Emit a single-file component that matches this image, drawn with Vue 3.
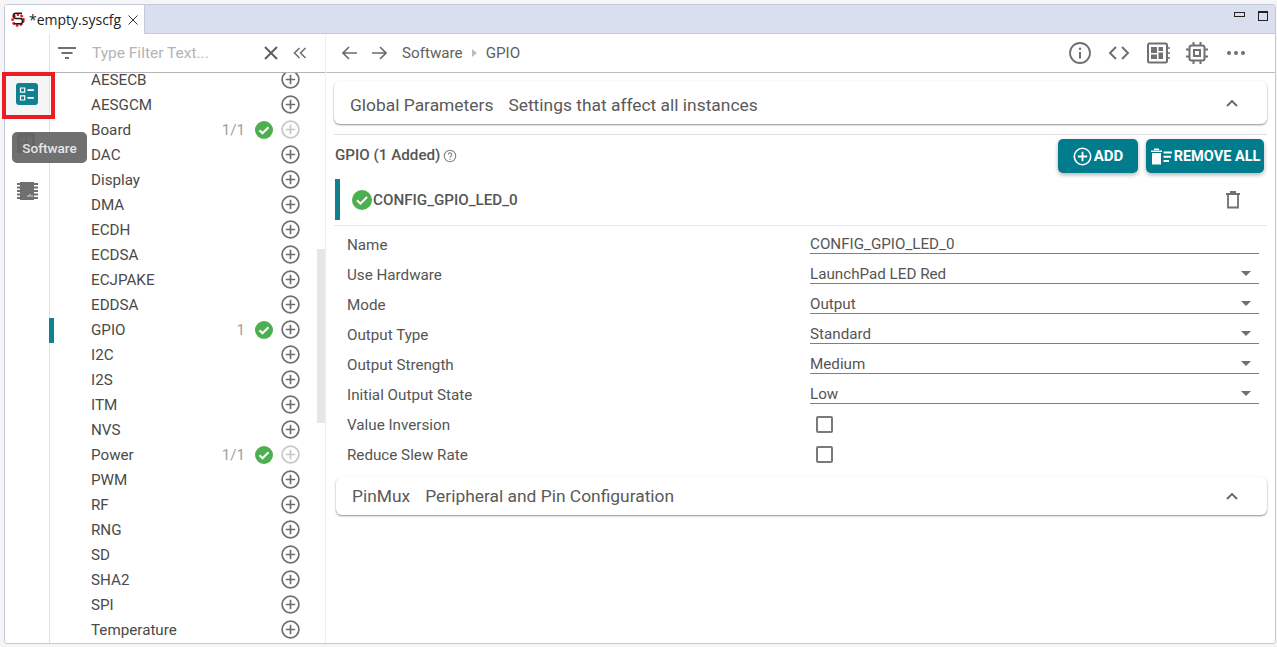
<template>
  <div class="frame">
    <!-- Tab bar -->
    <div class="tabbar">
      <div class="tab">
        <svg class="tab-logo" width="14" height="17" viewBox="0 0 14 17" fill="none">
          <circle cx="7" cy="9" r="5.400" stroke="#e0202a" stroke-width="2.600" stroke-dasharray="2.600 1.300" />
          <path d="M11 2.200H5a2.600 2.600 0 0 0 0 5.300h4a2.600 2.600 0 0 1 0 5.300H2.800" stroke="#1b1b1b" stroke-width="1.600" />
        </svg>
        <span class="tab-name">*empty.syscfg</span>
        <svg class="tab-close" width="10" height="10" viewBox="0 0 10 10">
          <path d="M.5.5l9 9M9.5.5l-9 9" stroke="#333" stroke-width="1" />
        </svg>
      </div>
      <div class="win-controls">
        <span class="win-min"></span>
        <span class="win-max"></span>
      </div>
    </div>

    <div class="body">
      <!-- Left icon rail -->
      <div class="rail">
        <div class="rail-btn active">
          <svg width="22" height="22" viewBox="0 0 22 22">
            <rect width="22" height="22" rx="3" fill="#11808f" />
            <path d="M4.500 5h4.200v4.200H4.500zM4.500 12.800h4.200V17H4.500z" fill="none" stroke="#fff" stroke-width="1.200" />
            <path d="M11.500 6.200h6.300v1.800h-6.300zM11.500 14h6.300v1.800h-6.300z" fill="#fff" />
          </svg>
        </div>
        <div class="rail-btn">
          <svg width="22" height="22" viewBox="0 0 22 22">
            <rect x="1" y="1" width="18" height="20" rx="2" fill="#6f6f6f" />
            <path d="M4 5h5v5H4zM11 5h5v12h-5zM4 12h5v5H4z" fill="#bbb" />
          </svg>
        </div>
        <div class="rail-btn">
          <svg width="22" height="22" viewBox="0 0 22 22">
            <path d="M4 2h14v18H4z" fill="#6f6f6f" />
            <path d="M1 4h21M1 7.500h21M1 11h21M1 14.500h21M1 18h21" stroke="#6f6f6f" stroke-width="1.800" />
            <path d="M12 17v-2M14 17v-3M16 17v-2" stroke="#ddd" stroke-width="1" />
          </svg>
        </div>
      </div>

      <!-- Module list -->
      <div class="sidebar">
        <div class="filter">
          <svg class="filter-icon" width="18" height="14" viewBox="0 0 18 14">
            <path d="M0 1h18v2H0zM3.500 6h11v2h-11zM7 11h4v2H7z" fill="#707070" />
          </svg>
          <span class="filter-text">Type Filter Text...</span>
          <svg class="filter-clear" width="14" height="14" viewBox="0 0 14 14">
            <path d="M1 1l12 12M13 1L1 13" stroke="#5f5f5f" stroke-width="2" />
          </svg>
          <svg class="filter-collapse" width="14" height="12" viewBox="0 0 14 12" fill="none">
            <path d="M6.500 1L1.500 6l5 5M12.500 1l-5 5 5 5" stroke="#707070" stroke-width="1.600" />
          </svg>
        </div>
        <div class="list">
          <div class="list-inner">
            <div v-for="m in modules" :key="m.name" class="row" :class="{ selected: m.name === 'GPIO' }">
              <span class="row-name">{{ m.name }}</span>
              <span v-if="m.count" class="row-count">{{ m.count }}</span>
              <svg v-if="m.count" class="row-check" width="18" height="18" viewBox="0 0 18 18">
                <circle cx="9" cy="9" r="9" fill="#4caf50" />
                <path d="M4.500 9.300l3 3 6-6" fill="none" stroke="#fff" stroke-width="2" />
              </svg>
              <svg class="row-add" :class="{ off: m.count && m.count !== '1' }" width="19" height="19" viewBox="0 0 19 19" fill="none">
                <circle cx="9.500" cy="9.500" r="8.400" stroke="currentColor" stroke-width="1.700" />
                <path d="M9.500 4.800v9.400M4.800 9.500h9.400" stroke="currentColor" stroke-width="1.700" />
              </svg>
            </div>
          </div>
          <div class="scroll-thumb"></div>
        </div>
      </div>

      <!-- Main content -->
      <div class="main">
        <div class="toolbar">
          <svg class="nav" width="16" height="14" viewBox="0 0 16 14" fill="none">
            <path d="M15 7H1.500M7 1L1 7l6 6" stroke="#6b6b6b" stroke-width="1.600" />
          </svg>
          <svg class="nav" width="16" height="14" viewBox="0 0 16 14" fill="none">
            <path d="M1 7h13.500M9 1l6 6-6 6" stroke="#6b6b6b" stroke-width="1.600" />
          </svg>
          <span class="crumb first">Software</span>
          <svg class="crumb-sep" width="5" height="8" viewBox="0 0 5 8"><path d="M0 0l5 4-5 4z" fill="#bdbdbd" /></svg>
          <span class="crumb">GPIO</span>
          <div class="tools">
            <svg width="24" height="24" viewBox="0 0 24 24" fill="none">
              <circle cx="12" cy="12" r="10" stroke="#707070" stroke-width="1.800" />
              <path d="M12 11v6.500" stroke="#707070" stroke-width="2" />
              <circle cx="12" cy="7.800" r="1.200" fill="#707070" />
            </svg>
            <svg width="24" height="24" viewBox="0 0 24 24" fill="none">
              <path d="M9 6l-6 6 6 6M15 6l6 6-6 6" stroke="#707070" stroke-width="2" />
            </svg>
            <svg width="24" height="24" viewBox="0 0 24 24" fill="none">
              <rect x="2" y="2.500" width="19" height="19" rx="1.500" stroke="#707070" stroke-width="2" />
              <path d="M5 6h6v6H5zM12.500 6H17v4h-4.500zM12.500 11.500H17V18h-4.500zM5 13.500h6V18H5z" fill="#707070" />
              <path d="M22 7h2M22 12h2M22 17h2" stroke="#707070" stroke-width="1.500" />
            </svg>
            <svg width="24" height="24" viewBox="0 0 24 24" fill="none">
              <rect x="4.500" y="4.500" width="15" height="15" rx="2" stroke="#707070" stroke-width="2" />
              <rect x="9" y="9" width="6" height="6" stroke="#707070" stroke-width="2" />
              <path d="M8.500 1v3M15.500 1v3M8.500 20v3M15.500 20v3M1 8.500h3M1 15.500h3M20 8.500h3M20 15.500h3" stroke="#707070" stroke-width="2" />
            </svg>
            <svg width="24" height="24" viewBox="0 0 24 24">
              <circle cx="5" cy="12" r="2" fill="#707070" />
              <circle cx="12" cy="12" r="2" fill="#707070" />
              <circle cx="19" cy="12" r="2" fill="#707070" />
            </svg>
          </div>
        </div>

        <div class="card global">
          <span class="card-title">Global Parameters</span>
          <span class="card-sub">Settings that affect all instances</span>
          <svg class="chevron" width="12" height="8" viewBox="0 0 12 8" fill="none">
            <path d="M1 7l5-5 5 5" stroke="#666" stroke-width="1.800" />
          </svg>
        </div>

        <div class="section-head">
          <span class="section-title">GPIO (1 Added)</span>
          <svg class="help" width="14" height="14" viewBox="0 0 14 14" fill="none">
            <circle cx="7" cy="7" r="5.700" stroke="#808080" stroke-width="1.100" />
            <path d="M5.200 5.700A1.800 1.800 0 1 1 7.600 7.400c-.5.300-.6.500-.6 1.100" stroke="#808080" stroke-width="1.100" />
            <circle cx="7" cy="10.200" r=".7" fill="#808080" />
          </svg>
          <button class="btn add">
            <svg width="19" height="19" viewBox="0 0 19 19" fill="none">
              <circle cx="9.500" cy="9.500" r="8.200" stroke="#fff" stroke-width="1.600" />
              <path d="M9.500 4.800v9.400M4.800 9.500h9.400" stroke="#fff" stroke-width="1.800" />
            </svg>
            ADD
          </button>
          <button class="btn remove">
            <svg width="23" height="18" viewBox="0 0 23 18">
              <path d="M1 3.500h11V5H1zM4 1.500h5V3H4zM2 6h9v11.500H2z" fill="#fff" />
              <path d="M13.500 4.500H22v2h-8.500zM13.500 8.800H21v2h-7.500zM13.500 13H19v2h-5.500z" fill="#fff" />
            </svg>
            REMOVE ALL
          </button>
        </div>

        <div class="instance">
          <svg width="20" height="20" viewBox="0 0 20 20">
            <circle cx="10" cy="10" r="10" fill="#4caf50" />
            <path d="M5 10.300l3.400 3.400 6.700-6.700" fill="none" stroke="#fff" stroke-width="2" />
          </svg>
          <span class="instance-name">CONFIG_GPIO_LED_0</span>
          <svg class="trash" width="14" height="18" viewBox="0 0 14 18" fill="none">
            <path d="M0 3h14M4 1h6" stroke="#707070" stroke-width="1.800" />
            <path d="M2 4v12.500h10V4" stroke="#707070" stroke-width="1.800" />
          </svg>
        </div>

        <div class="form">
          <template v-for="f in fields" :key="f.label">
            <div class="label">{{ f.label }}</div>
            <div v-if="f.check" class="check-cell"><span class="checkbox"></span></div>
            <div v-else class="value">
              <span>{{ f.value }}</span>
              <span v-if="f.select" class="caret"></span>
            </div>
          </template>
        </div>

        <div class="card pinmux">
          <span class="card-title">PinMux</span>
          <span class="card-sub">Peripheral and Pin Configuration</span>
          <svg class="chevron" width="12" height="8" viewBox="0 0 12 8" fill="none">
            <path d="M1 7l5-5 5 5" stroke="#666" stroke-width="1.800" />
          </svg>
        </div>
      </div>
    </div>

    <div class="tooltip">Software</div>
    <div class="highlight"></div>
  </div>
</template>

<script setup>
const modules = [
  { name: 'AESECB' }, { name: 'AESGCM' }, { name: 'Board', count: '1/1' }, { name: 'DAC' },
  { name: 'Display' }, { name: 'DMA' }, { name: 'ECDH' }, { name: 'ECDSA' }, { name: 'ECJPAKE' },
  { name: 'EDDSA' }, { name: 'GPIO', count: '1' }, { name: 'I2C' }, { name: 'I2S' }, { name: 'ITM' },
  { name: 'NVS' }, { name: 'Power', count: '1/1' }, { name: 'PWM' }, { name: 'RF' }, { name: 'RNG' },
  { name: 'SD' }, { name: 'SHA2' }, { name: 'SPI' }, { name: 'Temperature' }
]

const fields = [
  { label: 'Name', value: 'CONFIG_GPIO_LED_0' },
  { label: 'Use Hardware', value: 'LaunchPad LED Red', select: true },
  { label: 'Mode', value: 'Output', select: true },
  { label: 'Output Type', value: 'Standard', select: true },
  { label: 'Output Strength', value: 'Medium', select: true },
  { label: 'Initial Output State', value: 'Low', select: true },
  { label: 'Value Inversion', check: true },
  { label: 'Reduce Slew Rate', check: true }
]
</script>

<style>
html, body {
  margin: 0;
  background: #f5f5f5;
  overflow: hidden;
}
</style>

<style scoped>
.frame {
  position: relative;
  box-sizing: border-box;
  width: 1272px;
  height: 640px;
  margin: 4px 0 0 4px;
  border: 1px solid #c3c9df;
  border-radius: 3px;
  background: #fff;
  display: flex;
  flex-direction: column;
  font-family: Roboto, sans-serif;
  font-size: 15.200px;
  color: #555;
}

/* Tab bar */
.tabbar {
  flex: none;
  height: 29px;
  box-sizing: border-box;
  background: #d9dfee;
  border-bottom: 1px solid #c3c9df;
  display: flex;
  justify-content: space-between;
}

.tab {
  width: 140px;
  height: 29px;
  box-sizing: border-box;
  background: #fff;
  border-right: 1px solid #c3c9df;
  display: flex;
  align-items: center;
  padding-left: 6px;
}

.tab-name {
  margin-left: 4px;
  font-family: "Open Sans", sans-serif;
  font-size: 14px;
  color: #222;
}

.tab-close {
  margin-left: 7px;
}

.win-controls {
  display: flex;
  padding: 6px 0 0 0;
  margin-right: 7px;
  gap: 13px;
}

.win-min {
  width: 9px;
  height: 3px;
  border: 1px solid #222;
  margin-top: 1px;
}

.win-max {
  width: 8px;
  height: 7px;
  border: 1px solid #222;
  border-top-width: 2px;
}

/* Body */
.body {
  flex: 1;
  min-height: 0;
  display: flex;
}

.rail {
  flex: none;
  width: 45px;
  box-sizing: border-box;
  padding-top: 36px;
  border-right: 1px solid #e2e2e2;
}

.rail-btn {
  height: 48.500px;
  display: flex;
  align-items: center;
  justify-content: center;
}

.rail-btn.active {
  background: #f5f5f5;
}

/* Sidebar */
.sidebar {
  flex: none;
  width: 276px;
  box-sizing: border-box;
  border-right: 1px solid #eee;
  display: flex;
  flex-direction: column;
  min-height: 0;
}

.filter {
  flex: none;
  height: 39px;
  box-sizing: border-box;
  border-bottom: 1px solid #b5b5b5;
  display: flex;
  align-items: center;
  padding-left: 8px;
}

.filter-text {
  margin-left: 16px;
  width: 170px;
  font-size: 15.500px;
  color: #b4b4b4;
}

.filter-clear {
  margin-left: 2px;
}

.filter-collapse {
  margin-left: 15px;
}

.list {
  position: relative;
  flex: 1;
  min-height: 0;
  overflow: hidden;
  margin-left: -1px;
}

.list-inner {
  margin-top: -6px;
}

.row {
  position: relative;
  height: 25px;
  display: flex;
  align-items: center;
  padding-left: 42px;
  color: #4a4a4a;
}

.row.selected::before {
  content: "";
  position: absolute;
  left: 0;
  top: 1px;
  width: 5px;
  height: 25px;
  background: #11808f;
}

.row-name {
  flex: 1;
}

.row-count {
  color: #a0a0a0;
  margin-right: 10px;
}

.row-check {
  margin-right: 8px;
}

.row-add {
  margin-right: 25px;
  color: #6f6f6f;
}

.row-add.off {
  color: #c6c6c6;
}

.scroll-thumb {
  position: absolute;
  top: 176px;
  right: 0;
  width: 8px;
  height: 174px;
  background: #e6e6e6;
}

/* Main */
.main {
  flex: 1;
  min-width: 0;
  box-sizing: border-box;
  padding: 0 8px;
}

.toolbar {
  height: 40px;
  box-sizing: border-box;
  margin: -1px -8px 0;
  padding: 0 27px 0 16px;
  border-bottom: 1px solid #bdbdbd;
  display: flex;
  align-items: center;
}

.nav {
  margin-right: 13px;
}

.crumb {
  color: #5f5f5f;
}

.crumb.first {
  margin-left: 2px;
}

.crumb-sep {
  margin: 0 9px;
}

.tools {
  margin-left: auto;
  display: flex;
  align-items: center;
  gap: 15px;
}

.card {
  background: #fff;
  border-radius: 6px;
  box-shadow: 0 1px 2px rgba(0, 0, 0, 0.45);
  display: flex;
  align-items: center;
  font-size: 17.400px;
  color: #5a5a5a;
}

.card-title,
.card-sub {
  padding-top: 4px;
}

.pinmux .card-title,
.pinmux .card-sub {
  padding-top: 0;
}

.card-title {
  margin-right: 15px;
}

.chevron {
  margin-left: auto;
  margin-right: 29px;
}

.global {
  margin-top: 8px;
  height: 43px;
  padding-left: 16px;
}

.section-head {
  margin-top: 10px;
  padding: 4px 3px 0 1px;
  border-top: 1px solid #e0e0e0;
  display: flex;
  align-items: center;
}

.section-title {
  font-weight: 500;
  color: #555;
  margin-top: -2px;
}

.help {
  margin-left: 3px;
}

.btn {
  height: 34px;
  box-sizing: border-box;
  border: 0;
  border-radius: 5px;
  background: #007c8c;
  color: #fff;
  font-family: Roboto, sans-serif;
  font-size: 14.500px;
  font-weight: 700;
  box-shadow: 0 2px 4px rgba(0, 0, 0, 0.3);
  display: flex;
  align-items: center;
  justify-content: center;
  gap: 2px;
  padding: 0;
}

.add {
  width: 80px;
  margin-left: auto;
  font-size: 15px;
}

.remove {
  width: 118px;
  margin-left: 8px;
  gap: 1px;
}

.instance {
  margin-top: 6px;
  margin-left: 1px;
  height: 41px;
  box-sizing: border-box;
  border-left: 5px solid #11808f;
  padding-left: 12px;
  display: flex;
  align-items: center;
}

.instance-name {
  margin-left: 1px;
  font-weight: 500;
  color: #555;
}

.trash {
  margin-left: auto;
  margin-right: 27px;
}

.form {
  margin-top: 5px;
  padding: 4px 8px 0 13px;
  border-top: 1px solid #e6e6e6;
  display: grid;
  grid-template-columns: 463px 1fr;
  grid-auto-rows: 30px;
}

.label {
  display: flex;
  align-items: center;
  color: #555;
}

.value {
  height: 19px;
  margin-top: 4px;
  border-bottom: 1px solid #808080;
  display: flex;
  align-items: flex-end;
  justify-content: space-between;
  color: #555;
  line-height: 18px;
}

.caret {
  width: 0;
  height: 0;
  margin: 0 8px 7px 0;
  border-left: 5px solid transparent;
  border-right: 5px solid transparent;
  border-top: 5px solid #707070;
}

.check-cell {
  display: flex;
  align-items: center;
  padding: 0 0 2px 6px;
}

.checkbox {
  width: 13px;
  height: 13px;
  border: 2px solid #7a7a7a;
  border-radius: 2px;
}

.pinmux {
  margin-top: 7px;
  margin-left: 2px;
  height: 38px;
  padding-left: 16px;
}

/* Overlays */
.tooltip {
  position: absolute;
  left: 7px;
  top: 127px;
  width: 75px;
  height: 31px;
  border-radius: 5px;
  background: rgba(100, 100, 100, 0.92);
  color: #e6e6e6;
  font-size: 13.500px;
  font-weight: 500;
  display: flex;
  align-items: center;
  justify-content: center;
}

.highlight {
  position: absolute;
  left: -3px;
  top: 67px;
  width: 45px;
  height: 39px;
  border: 4px solid #ed1c24;
}
</style>
